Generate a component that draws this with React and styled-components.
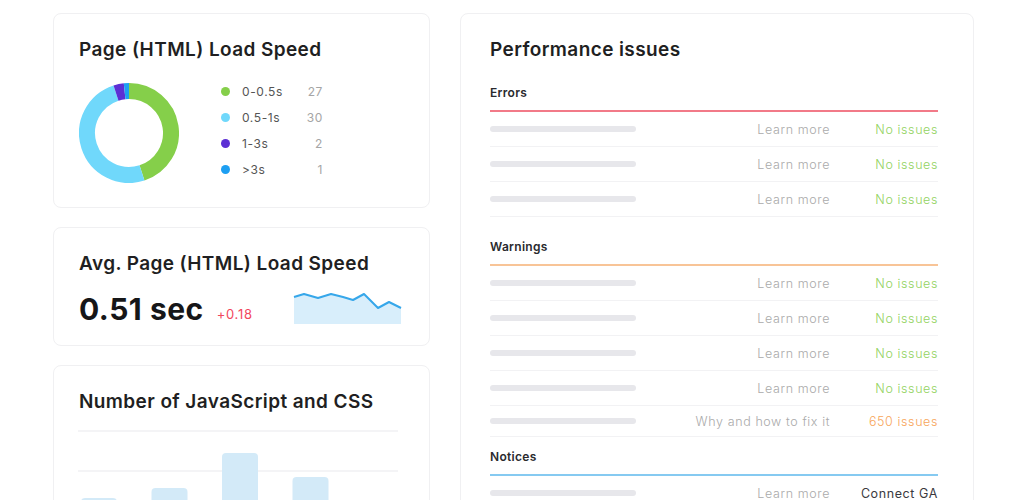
import styled, { createGlobalStyle } from "styled-components";

const GlobalStyle = createGlobalStyle`
  body {
    margin: 0;
    background: #ffffff;
    font-family: Inter, "Noto Sans", sans-serif;
    color: #222;
  }
`;

const Page = styled.div`
  display: grid;
  grid-template-columns: 377px 514px;
  column-gap: 30px;
  align-items: start;
  padding: 13px 0 0 53px;
  height: 500px;
  box-sizing: border-box;
  overflow: hidden;
`;

const Column = styled.div`
  display: flex;
  flex-direction: column;
  gap: 19px;
`;

const Card = styled.div`
  box-sizing: border-box;
  height: ${(p) => p.$height}px;
  border: 1px solid #f0f0f2;
  border-radius: 8px;
  background: #fff;
  padding: 25px ${(p) => p.$padRight || 26}px 0 ${(p) => p.$padLeft || 25}px;
`;

const Title = styled.h2`
  margin: 0;
  font-size: 19px;
  line-height: 22px;
  font-weight: 600;
  color: #1f1f22;
  letter-spacing: 0.4px;
`;

/* ---- load speed donut ---- */
const DonutRow = styled.div`
  display: flex;
  align-items: flex-start;
  gap: 42px;
  margin-top: 22px;
`;

const Legend = styled.ul`
  list-style: none;
  margin: -5px 0 0;
  padding: 0;
  width: 102px;
`;

const LegendItem = styled.li`
  display: grid;
  grid-template-columns: 9px 1fr auto;
  align-items: center;
  column-gap: 12px;
  height: 26px;
  font-size: 12px;
  letter-spacing: 0.6px;
`;

const Dot = styled.span`
  width: 9px;
  height: 9px;
  border-radius: 50%;
  background: ${(p) => p.$color};
`;

const LegendLabel = styled.span`
  color: #555;
`;

const LegendValue = styled.span`
  color: #a5a5a5;
  text-align: right;
`;

/* ---- avg speed ---- */
const StatRow = styled.div`
  display: flex;
  align-items: center;
  margin-top: 16px;
`;

const Value = styled.span`
  font-size: 30px;
  line-height: 36px;
  font-weight: 700;
  color: #161618;
  letter-spacing: 0.5px;
`;

const Delta = styled.span`
  font-size: 13px;
  color: #f2485d;
  letter-spacing: 0.7px;
  margin: 10px 0 0 13px;
`;

const Spark = styled.svg`
  margin-left: auto;
  margin-top: -4px;
`;

const BarChart = styled.svg`
  display: block;
  margin: 17px 0 0 -1px;
`;

/* ---- performance issues ---- */
const Section = styled.div`
  margin-top: ${(p) => p.$top}px;
`;

const SectionHead = styled.div`
  font-size: 12px;
  line-height: 16px;
  font-weight: 600;
  color: #2a2a2e;
  letter-spacing: 0.3px;
  padding-bottom: 9px;
  border-bottom: 2px solid ${(p) => p.$color};
`;

const IssueRow = styled.div`
  display: grid;
  grid-template-columns: 1fr auto 108px;
  align-items: center;
  height: ${(p) => p.$h || 34}px;
  border-bottom: 1px solid #f2f2f4;
  font-size: 12.5px;
  letter-spacing: 0.6px;
`;

const Placeholder = styled.span`
  width: 146px;
  height: 6px;
  border-radius: 3px;
  background: #e7e7eb;
`;

const LinkText = styled.span`
  color: #aaaaaa;
  font-weight: 300;
`;

const Status = styled.span`
  text-align: right;
  font-weight: ${(p) => p.$weight || 300};
  color: ${(p) => p.$color};
`;

const legend = [
  { label: "0-0.5s", value: 27, color: "#85cf4a" },
  { label: "0.5-1s", value: 30, color: "#70d8fb" },
  { label: "1-3s", value: 2, color: "#5c2fd4" },
  { label: ">3s", value: 1, color: "#1d9ff2" },
];

const arc = (cx, cy, r, a0, a1) => {
  const p = (a) => [cx + r * Math.sin(a), cy - r * Math.cos(a)];
  const [x0, y0] = p(a0);
  const [x1, y1] = p(a1);
  const large = a1 - a0 > Math.PI ? 1 : 0;
  return `M${x0} ${y0} A${r} ${r} 0 ${large} 1 ${x1} ${y1}`;
};

const Donut = () => {
  const total = legend.reduce((s, l) => s + l.value, 0);
  let start = 0;
  return (
    <svg width="100" height="100" viewBox="0 0 100 100">
      {legend.map((l) => {
        const end = start + (l.value / total) * Math.PI * 2;
        const d = arc(50, 50, 42, start, end);
        start = end;
        return <path key={l.label} d={d} fill="none" stroke={l.color} strokeWidth="16" />;
      })}
    </svg>
  );
};

const sparkPts = [
  [1, 7], [11, 4], [25, 8], [38, 4], [50, 7], [60, 10], [71, 4], [85, 18], [96, 12], [108, 18],
];

const Sparkline = () => {
  const line = sparkPts.map((p) => p.join(",")).join(" ");
  return (
    <Spark width="110" height="34" viewBox="0 0 110 34">
      <polygon points={`1,34 ${line} 108,34`} fill="#d8eefb" />
      <polyline points={line} fill="none" stroke="#36a7ea" strokeWidth="2" strokeLinejoin="round" />
    </Spark>
  );
};

const bars = [38, 48, 83, 59, 30];

const Bars = () => (
  <BarChart width="322" height="130" viewBox="0 0 322 130">
    <line x1="0" y1="1" x2="320" y2="1" stroke="#f1f1f3" strokeWidth="1.5" />
    <line x1="0" y1="41" x2="320" y2="41" stroke="#f1f1f3" strokeWidth="1.5" />
    <line x1="0" y1="81" x2="320" y2="81" stroke="#f1f1f3" strokeWidth="1.5" />
    {bars.map((h, i) => (
      <rect key={i} x={3 + i * 70.5} y={106 - h} width="36" height={h + 30} rx="4" fill="#d3eaf8" />
    ))}
  </BarChart>
);

const ok = { link: "Learn more", status: "No issues", color: "#93d35f" };

const sections = [
  { name: "Errors", color: "#f27a88", top: 24, rows: [ok, ok, ok] },
  {
    name: "Warnings",
    color: "#f8c497",
    top: 22,
    rows: [
      ok,
      ok,
      ok,
      ok,
      { link: "Why and how to fix it", status: "650 issues", color: "#f7a55a", h: 30 },
    ],
  },
  {
    name: "Notices",
    color: "#86caf1",
    top: 12,
    rows: [{ link: "Learn more", status: "Connect GA", color: "#3a3a3e", weight: 400 }],
  },
];

export default function App() {
  return (
    <>
      <GlobalStyle />
      <Page>
        <Column>
          <Card $height={195}>
            <Title>Page (HTML) Load Speed</Title>
            <DonutRow>
              <Donut />
              <Legend>
                {legend.map((l) => (
                  <LegendItem key={l.label}>
                    <Dot $color={l.color} />
                    <LegendLabel>{l.label}</LegendLabel>
                    <LegendValue>{l.value}</LegendValue>
                  </LegendItem>
                ))}
              </Legend>
            </DonutRow>
          </Card>
          <Card $height={119}>
            <Title>Avg. Page (HTML) Load Speed</Title>
            <StatRow>
              <Value>0.51 sec</Value>
              <Delta>+0.18</Delta>
              <Sparkline />
            </StatRow>
          </Card>
          <Card $height={170}>
            <Title>Number of JavaScript and CSS</Title>
            <Bars />
          </Card>
        </Column>
        <Card $height={520} $padLeft={29} $padRight={35}>
          <Title>Performance issues</Title>
          {sections.map((s) => (
            <Section key={s.name} $top={s.top}>
              <SectionHead $color={s.color}>{s.name}</SectionHead>
              {s.rows.map((r, i) => (
                <IssueRow key={i} $h={r.h}>
                  <Placeholder />
                  <LinkText>{r.link}</LinkText>
                  <Status $color={r.color} $weight={r.weight}>
                    {r.status}
                  </Status>
                </IssueRow>
              ))}
            </Section>
          ))}
        </Card>
      </Page>
    </>
  );
}
